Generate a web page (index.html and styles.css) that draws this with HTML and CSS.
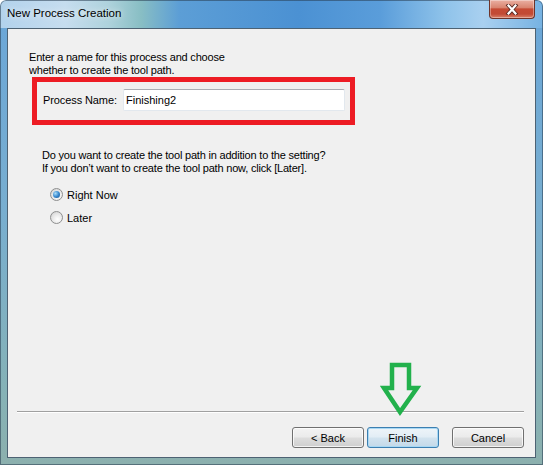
FILE: index.html
```html
<!DOCTYPE html>
<html lang="en">
<head>
    <meta charset="UTF-8">
    <title>New Process Creation</title>
    <link rel="stylesheet" href="styles.css">
</head>
<body>
    <div class="window">
        <div class="titlebar">
            <span class="title">New Process Creation</span>
            <button class="close-btn" aria-label="Close">
                <svg width="14" height="11" viewBox="0 0 14 11">
                    <path d="M3.5 1.5 L10.5 9.5 M10.5 1.5 L3.5 9.5" stroke="#5b2b24" stroke-width="4" stroke-linecap="square"/>
                    <path d="M3.5 1.5 L10.5 9.5 M10.5 1.5 L3.5 9.5" stroke="#fff" stroke-width="2.2" stroke-linecap="square"/>
                </svg>
            </button>
        </div>
        <div class="client">
            <div class="page">
                <p class="intro">Enter a name for this process and choose<br>whether to create the tool path.</p>
                <div class="highlight">
                    <label class="field-label" for="procName">Process Name:</label>
                    <div class="textbox" id="procName">Finishing2</div>
                </div>
                <p class="question">Do you want to create the tool path in addition to the setting?<br>If you don’t want to create the tool path now, click [Later].</p>
                <div class="options">
                    <div class="option"><span class="radio checked"></span>Right Now</div>
                    <div class="option"><span class="radio"></span>Later</div>
                </div>
            </div>
            <div class="footer">
                <div class="separator"></div>
                <div class="buttons">
                    <button class="btn">&lt; Back</button>
                    <button class="btn default">Finish</button>
                    <button class="btn cancel">Cancel</button>
                </div>
            </div>
        </div>
        <!-- green annotation arrow pointing at Finish -->
        <svg class="arrow" width="46" height="62" viewBox="0 0 46 62">
            <polygon points="14,7 31,7 31,30 39,30 22,54 6,30 14,30" fill="none" stroke="#22b14c" stroke-width="4.5"/>
        </svg>
    </div>
</body>
</html>
```

FILE: styles.css
```css
* { margin: 0; padding: 0; box-sizing: border-box; }
html, body { width: 543px; height: 465px; overflow: hidden; }
body { font-family: "Liberation Sans", Arial, sans-serif; font-size: 11px; color: #000; background: #fff; }

.window {
    position: relative;
    width: 543px;
    height: 465px;
    padding: 0 7px 7px 7px;
    display: flex;
    flex-direction: column;
    border-radius: 6px 6px 0 0;
    background:
        linear-gradient(90deg, #b2d2ec 0%, #c6ddef 12%, #aed2dc 20%, #88bec4 26%, #5c9ed6 33%, #4b91d3 55%, #5a9dda 70%, #8fc3ea 82%, #a9d0f0 89%, #76b2e2 100%) top / 100% 28px no-repeat,
        linear-gradient(180deg, #6aa6d8 0%, #78aed0 45%, #86b2b6 85%, #8cb0ae 100%);
    box-shadow: inset 0 0 0 1px rgba(40, 60, 80, 0.55);
}

.titlebar { height: 28px; display: flex; align-items: flex-start; }
.title {
    margin-top: 6px;
    font-size: 11.5px;
    line-height: 15px;
    color: #000;
    text-shadow: 0 0 6px rgba(255,255,255,0.9);
}
.close-btn {
    margin-left: auto;
    margin-right: 1px;
    width: 46px;
    height: 19px;
    border: 1px solid #6e3329;
    border-top: none;
    border-radius: 0 0 4px 4px;
    background: linear-gradient(180deg, #eab0a2 0%, #d98570 42%, #c54a33 50%, #c24a34 78%, #d9826a 100%);
    box-shadow: inset 0 0 0 1px rgba(255,255,255,0.35);
    display: flex;
    align-items: center;
    justify-content: center;
}

.client {
    flex: 1;
    display: flex;
    flex-direction: column;
    background: #f0f0f0;
    border: 1px solid #4d6273;
}

.page { padding: 22px 21px 0 21px; }
.intro { line-height: 13px; letter-spacing: -0.2px; }

.highlight {
    margin-left: 3px;
    width: 323px;
    height: 48px;
    border: 5px solid #ed1c24;
    display: flex;
    align-items: center;
    padding: 0 0 2px 6px;
}
.field-label { flex: 0 0 80px; letter-spacing: -0.1px; }
.textbox {
    width: 222px;
    height: 22px;
    background: #fff;
    border: 1px solid #e2e8ee;
    border-top-color: #abadb3;
    border-radius: 2px;
    padding-left: 2px;
    line-height: 20px;
}

.question { margin: 24px 0 0 13px; line-height: 13px; letter-spacing: -0.2px; }

.options { margin-top: 8px; padding-left: 21px; }
.option { height: 23px; display: flex; align-items: center; gap: 4px; }
.radio {
    width: 13px;
    height: 13px;
    border-radius: 50%;
    border: 1px solid #8e8f8f;
    background: radial-gradient(circle at 60% 65%, #ffffff 0%, #e6e6e6 55%, #c9c9c9 100%);
    display: flex;
    align-items: center;
    justify-content: center;
}
.radio.checked::after {
    content: "";
    width: 7px;
    height: 7px;
    border-radius: 50%;
    background: radial-gradient(circle at 35% 35%, #a8dcf8 0%, #3a8ad0 50%, #164f8a 100%);
}

.footer { margin-top: auto; padding: 0 11px 9px 9px; }
.separator { height: 2px; border-top: 1px solid #a0a0a0; border-bottom: 1px solid #ffffff; }
.buttons { margin-top: 14px; display: flex; justify-content: flex-end; gap: 3px; }
.btn {
    width: 72px;
    height: 21px;
    border: 1px solid #707070;
    border-radius: 3px;
    font-family: "Liberation Sans", Arial, sans-serif;
    font-size: 11px;
    color: #000;
    background: linear-gradient(180deg, #f3f3f3 0%, #ebebeb 48%, #dddddd 52%, #cfcfcf 100%);
    box-shadow: inset 0 0 0 1px rgba(255,255,255,0.75);
}
.btn.default {
    border-color: #3c7fb1;
    background: linear-gradient(180deg, #eef4f9 0%, #e2edf5 48%, #d2e3ef 52%, #c4d9e9 100%);
    box-shadow: inset 0 0 0 1px #a8d8f4;
}
.btn.cancel { margin-left: 10px; }

.arrow { position: absolute; left: 378px; top: 358px; }
```
